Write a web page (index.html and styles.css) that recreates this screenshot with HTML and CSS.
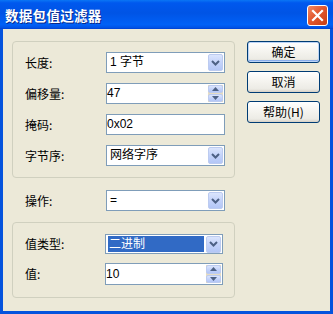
FILE: index.html
```
<!DOCTYPE html>
<html>
<head>
  <meta charset="UTF-8">
  <link rel="stylesheet" href="styles.css">
</head>
<body>
  <div class="window">
    <div class="titlebar">
      <span class="title">数据包值过滤器</span>
      <span class="close-btn">
        <svg width="13" height="13" viewBox="0 0 13 13"><path d="M2 2 L11 11 M11 2 L2 11" stroke="#fff" stroke-width="2.2" stroke-linecap="square"/></svg>
      </span>
    </div>

    <div class="client">
      <div class="main">
        <div class="group group-top">
          <span class="label">长度:</span>
          <div class="field combo">
            <span class="value">1 字节</span>
            <span class="drop"><svg width="9" height="6" viewBox="0 0 9 6"><path d="M1 1 L4.5 4.5 L8 1" fill="none" stroke="#4d6185" stroke-width="2"/></svg></span>
          </div>

          <span class="label">偏移量:</span>
          <div class="field spin">
            <span class="value tight">47</span>
            <span class="arrows">
              <span class="arrow up"><svg width="7" height="4" viewBox="0 0 7 4"><path d="M0 4 L3.5 0 L7 4 Z" fill="#4d6185"/></svg></span>
              <span class="arrow down"><svg width="7" height="4" viewBox="0 0 7 4"><path d="M0 0 L3.5 4 L7 0 Z" fill="#4d6185"/></svg></span>
            </span>
          </div>

          <span class="label">掩码:</span>
          <div class="field edit">
            <span class="value tight">0x02</span>
          </div>

          <span class="label">字节序:</span>
          <div class="field combo">
            <span class="value">网络字序</span>
            <span class="drop"><svg width="9" height="6" viewBox="0 0 9 6"><path d="M1 1 L4.5 4.5 L8 1" fill="none" stroke="#4d6185" stroke-width="2"/></svg></span>
          </div>
        </div>

        <div class="op-row">
          <span class="label">操作:</span>
          <div class="field combo">
            <span class="value">=</span>
            <span class="drop"><svg width="9" height="6" viewBox="0 0 9 6"><path d="M1 1 L4.5 4.5 L8 1" fill="none" stroke="#4d6185" stroke-width="2"/></svg></span>
          </div>
        </div>

        <div class="group group-value">
          <span class="label">值类型:</span>
          <div class="field combo short">
            <span class="value selected">二进制</span>
            <span class="drop"><svg width="9" height="6" viewBox="0 0 9 6"><path d="M1 1 L4.5 4.5 L8 1" fill="none" stroke="#4d6185" stroke-width="2"/></svg></span>
          </div>

          <span class="label">值:</span>
          <div class="field spin tall">
            <span class="value tight">10</span>
            <span class="arrows">
              <span class="arrow up"><svg width="7" height="4" viewBox="0 0 7 4"><path d="M0 4 L3.5 0 L7 4 Z" fill="#4d6185"/></svg></span>
              <span class="arrow down"><svg width="7" height="4" viewBox="0 0 7 4"><path d="M0 0 L3.5 4 L7 0 Z" fill="#4d6185"/></svg></span>
            </span>
          </div>
        </div>
      </div>

      <div class="buttons">
        <button class="btn default">确定</button>
        <button class="btn">取消</button>
        <button class="btn">帮助(H)</button>
      </div>
    </div>
  </div>
</body>
</html>
```

FILE: styles.css
```
html,
body {
  margin: 0;
  padding: 0;
  font-family: "Liberation Sans", "Noto Sans CJK SC", sans-serif;
  font-size: 12px;
  color: #000;
}

.window {
  width: 333px;
  height: 314px;
  box-sizing: border-box;
  display: flex;
  flex-direction: column;
  background: #0553dd;
}

.titlebar {
  height: 29px;
  flex: none;
  display: flex;
  align-items: center;
  justify-content: space-between;
  padding: 0 5px 0 5px;
  background: linear-gradient(to bottom, #0a76f5 0%, #0058ee 10%, #0054e5 45%, #0061f7 85%, #0053e6 95%, #0040d0 100%);
}

.title {
  color: #fff;
  font-family: "Noto Sans CJK SC", sans-serif;
  font-weight: bold;
  font-size: 13.5px;
  letter-spacing: 0.3px;
  text-shadow: 1px 1px 0 #0a2a8a;
  margin-top: 1px;
}

.close-btn {
  width: 21px;
  height: 21px;
  box-sizing: border-box;
  border: 1px solid #fff;
  border-radius: 3px;
  display: flex;
  align-items: center;
  justify-content: center;
  background: linear-gradient(135deg, #f08a64 0%, #e2582f 45%, #c83d14 100%);
  margin-top: 1px;
}

.client {
  flex: 1;
  margin: 0 3px 3px 3px;
  background: #ece9d8;
  display: flex;
  padding: 12px 0 0 9px;
}

.main {
  width: 223px;
  display: flex;
  flex-direction: column;
}

.group {
  box-sizing: border-box;
  border: 1px solid #d0d0bf;
  border-radius: 4px;
  display: grid;
  align-items: center;
}

.group-top {
  height: 137px;
  padding: 10px 9px 0 12px;
  grid-template-columns: 81px 119px;
  grid-auto-rows: 21px;
  row-gap: 10px;
  align-content: start;
}

.op-row {
  margin-top: 12px;
  height: 21px;
  padding-left: 13px;
  display: grid;
  grid-template-columns: 81px 119px;
  align-items: center;
}

.group-value {
  margin-top: 11px;
  height: 76px;
  padding: 11px 11px 0 12px;
  grid-template-columns: 80px 118px;
  grid-template-rows: 20px 22px;
  row-gap: 9px;
  align-content: start;
}

.label {
  font-family: "Noto Sans CJK SC", sans-serif;
  font-size: 12px;
  line-height: 14px;
}

.field {
  box-sizing: border-box;
  height: 100%;
  border: 1px solid #7f9db9;
  background: #fff;
  display: flex;
  align-items: center;
  position: relative;
}

.value {
  flex: 1;
  padding-left: 3px;
  line-height: 15px;
  white-space: nowrap;
}

.value.tight {
  padding-left: 0;
}

.value.selected {
  background: #316ac5;
  color: #fff;
  margin: 0 2px;
  padding-left: 1px;
  align-self: stretch;
  display: flex;
  align-items: center;
}

.short .value.selected {
  margin: 1px 2px;
}

.drop {
  width: 15px;
  height: 17px;
  margin-right: 1px;
  box-sizing: border-box;
  border: 1px solid #bccbf0;
  border-radius: 2px;
  background: linear-gradient(to bottom, #dbe5fd 0%, #c4d3fa 50%, #b3c6f6 100%);
  display: flex;
  align-items: center;
  justify-content: center;
}

.arrows {
  width: 15px;
  align-self: stretch;
  margin: 1px 1px 1px 0;
  display: flex;
  flex-direction: column;
  gap: 1px;
  background: #e6dcc2;
}

.arrow {
  flex: 1;
  box-sizing: border-box;
  border: 1px solid #bccbf0;
  border-radius: 2px;
  background: linear-gradient(to bottom, #dbe5fd 0%, #c4d3fa 50%, #b3c6f6 100%);
  display: flex;
  align-items: center;
  justify-content: center;
}

.buttons {
  margin-left: 12px;
  display: flex;
  flex-direction: column;
  gap: 8px;
}

.btn {
  width: 73px;
  height: 22px;
  box-sizing: border-box;
  border: 1px solid #003c74;
  border-radius: 3px;
  background: linear-gradient(to bottom, #ffffff 0%, #f4f3ee 50%, #ecebe5 85%, #d6d0c5 100%);
  font-family: "Noto Sans CJK SC", sans-serif;
  font-size: 12px;
  color: #000;
  padding: 0;
  text-align: center;
  line-height: 18px;
}

.btn.default {
  box-shadow: inset 0 0 0 1px #bcd4f6, inset 0 -1px 0 1px #89adeb;
}
```
